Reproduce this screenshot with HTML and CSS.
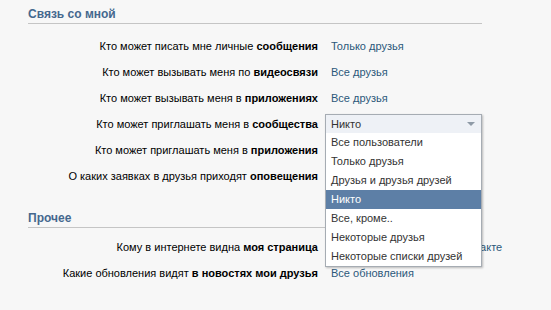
FILE: index.html
```html
<!DOCTYPE html>
<html lang="ru">
<head>
  <meta charset="UTF-8" />
  <title>Приватность</title>
  <link rel="stylesheet" href="styles.css">
</head>
<body>
  <div class="settings">
    <h2 class="section-title">Связь со мной</h2>
    <div class="rows">
      <div class="row">
        <div class="label">Кто может писать мне личные <b>сообщения</b></div>
        <div class="value">Только друзья</div>
      </div>
      <div class="row">
        <div class="label">Кто может вызывать меня по <b>видеосвязи</b></div>
        <div class="value">Все друзья</div>
      </div>
      <div class="row">
        <div class="label">Кто может вызывать меня в <b>приложениях</b></div>
        <div class="value">Все друзья</div>
      </div>
      <div class="row">
        <div class="label">Кто может приглашать меня в <b>сообщества</b></div>
        <div class="value has-select">
          <div class="select">
            <div class="select-current">
              <span>Никто</span>
              <span class="arrow"></span>
            </div>
            <ul class="select-list">
              <li>Все пользователи</li>
              <li>Только друзья</li>
              <li>Друзья и друзья друзей</li>
              <li class="active">Никто</li>
              <li>Все, кроме..</li>
              <li>Некоторые друзья</li>
              <li>Некоторые списки друзей</li>
            </ul>
          </div>
        </div>
      </div>
      <div class="row">
        <div class="label">Кто может приглашать меня в <b>приложения</b></div>
        <div class="value">Все друзья</div>
      </div>
      <div class="row">
        <div class="label">О каких заявках в друзья приходят <b>оповещения</b></div>
        <div class="value">От всех пользователей</div>
      </div>
    </div>

    <h2 class="section-title second">Прочее</h2>
    <div class="rows">
      <div class="row">
        <div class="label">Кому в интернете видна <b>моя страница</b></div>
        <div class="value">Только пользователям ВКонтакте</div>
      </div>
      <div class="row">
        <div class="label">Какие обновления видят <b>в новостях мои друзья</b></div>
        <div class="value">Все обновления</div>
      </div>
    </div>
  </div>
</body>
</html>
```

FILE: styles.css
```css
body {
  margin: 0;
  background: #f7f7f7;
  font-family: Tahoma, "Liberation Sans", "DejaVu Sans", sans-serif;
  font-size: 11px;
  color: #000;
}

.settings {
  width: 454px;
  margin-left: 28px;
}

.section-title {
  margin: 0;
  padding: 7px 0 2px;
  font-size: 12px;
  line-height: 14px;
  font-weight: bold;
  color: #45688e;
  border-bottom: 1px solid #c5c5c5;
}
.section-title.second {
  margin-top: 15px;
}

.rows {
  margin-top: 9px;
}
.section-title.second + .rows {
  margin-top: 6px;
}

.row {
  display: flex;
  align-items: center;
  height: 26px;
}

.label {
  width: 290px;
  flex-shrink: 0;
  text-align: right;
  white-space: nowrap;
}
.label b {
  color: #000;
}

.value {
  margin-left: 13px;
  color: #2b587a;
  white-space: nowrap;
}

.has-select {
  position: relative;
  align-self: stretch;
}

/* open dropdown lies over the following rows */
.select {
  position: absolute;
  top: 3px;
  left: -6px;
  width: 155px;
  border: 1px solid #a6acb3;
  background: #fff;
  box-shadow: 1px 1px 2px rgba(0, 0, 0, 0.25);
  z-index: 10;
  color: #333;
}

.select-current {
  display: flex;
  justify-content: space-between;
  align-items: center;
  height: 18px;
  padding: 0 6px 0 5px;
  background: #eef1f6;
  color: #333;
}

.arrow {
  width: 0;
  height: 0;
  border-left: 4px solid transparent;
  border-right: 4px solid transparent;
  border-top: 4px solid #8e9aa6;
}

.select-list {
  list-style: none;
  margin: 0;
  padding: 0;
}
.select-list li {
  height: 19px;
  line-height: 19px;
  padding-left: 5px;
  color: #333;
}
.select-list li.active {
  background: #5d7fa6;
  color: #fff;
}
```
